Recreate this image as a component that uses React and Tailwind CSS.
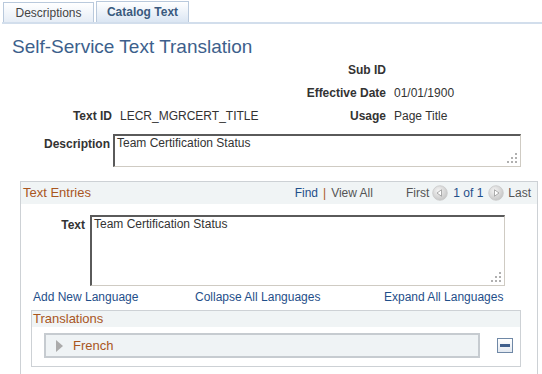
import React from "react";

const Grip = () => (
  <svg width="12" height="12" viewBox="0 0 12 12" className="absolute right-[2px] bottom-[2px]">
    <rect x="9" y="1" width="2" height="2" fill="#b0b0b0" />
    <rect x="5" y="5" width="2" height="2" fill="#b0b0b0" />
    <rect x="9" y="5" width="2" height="2" fill="#b0b0b0" />
    <rect x="1" y="9" width="2" height="2" fill="#b0b0b0" />
    <rect x="5" y="9" width="2" height="2" fill="#b0b0b0" />
    <rect x="9" y="9" width="2" height="2" fill="#b0b0b0" />
  </svg>
);

const TextBox = ({ text, className }) => (
  <div
    className={`relative bg-white border-t-2 border-l-2 border-r border-b border-t-[#5a5a5a] border-l-[#5a5a5a] border-r-[#cfcbc3] border-b-[#cfcbc3] pl-[2px] leading-[14px] ${className}`}
  >
    {text}
    <Grip />
  </div>
);

const PagerIcon = ({ dir }) => (
  <svg width="16" height="16" viewBox="0 0 16 16">
    <defs>
      <radialGradient id={`g${dir}`} cx="0.4" cy="0.35" r="0.7">
        <stop offset="0" stopColor="#f4f4f4" />
        <stop offset="1" stopColor="#c4c4c4" />
      </radialGradient>
    </defs>
    <circle cx="8" cy="8" r="7.3" fill={`url(#g${dir})`} stroke="#c9c9c9" strokeWidth="0.8" />
    {dir === "left" ? (
      <path d="M5 8 L9.5 4.8 L9.5 11.2 Z" fill="#ffffff" stroke="#8d8d8d" strokeWidth="0.7" />
    ) : (
      <path d="M11 8 L6.5 4.8 L6.5 11.2 Z" fill="#ffffff" stroke="#8d8d8d" strokeWidth="0.7" />
    )}
  </svg>
);

const Label = ({ children, className = "" }) => (
  <div className={`font-bold text-[#333] text-right ${className}`}>{children}</div>
);

const App = () => {
  return (
    <div className="w-[542px] h-[374px] overflow-hidden bg-white text-[12px] text-[#333] font-['Liberation_Sans',Arial,sans-serif]">
      {/* tabs */}
      <div className="flex items-end h-[24px] ml-[2px] pl-[1px] border-b-2 border-[#d2deec]">
        <div className="w-[91px] h-[20px] border border-b-0 border-[#b9c9dc] bg-gradient-to-b from-white to-[#e6edf6] text-[#444] flex items-center justify-center">
          Descriptions
        </div>
        <div className="ml-[2px] w-[93px] h-[21px] border border-b-0 border-[#b9c9dc] bg-gradient-to-b from-white to-[#dbe6f3] text-[#3a5a7e] font-bold flex items-center justify-center">
          Catalog Text
        </div>
      </div>

      {/* title */}
      <div className="mt-[12px] ml-[12px] h-[22px] leading-[22px] text-[19px] text-[#3d5f8c]">
        Self-Service Text Translation
      </div>

      {/* fields */}
      <div className="flex flex-col">
        <div className="flex items-center h-[23px]">
          <div className="w-[252px]" />
          <Label className="w-[134px]">Sub ID</Label>
        </div>
        <div className="flex items-center h-[23px]">
          <div className="w-[252px]" />
          <Label className="w-[134px]">Effective Date</Label>
          <div className="ml-[8px]">01/01/1900</div>
        </div>
        <div className="flex items-center h-[23px]">
          <Label className="w-[112px]">Text ID</Label>
          <div className="ml-[8px] w-[132px]">LECR_MGRCERT_TITLE</div>
          <Label className="w-[134px]">Usage</Label>
          <div className="ml-[8px]">Page Title</div>
        </div>
        <div className="flex items-start mt-[7px]">
          <Label className="w-[111px] pt-[1px] pr-[1px]">Description</Label>
          <TextBox text="Team Certification Status" className="ml-[2px] w-[408px] h-[33px]" />
        </div>
      </div>

      {/* Text Entries */}
      <div className="mt-[14px] ml-[20px] w-[518px] h-[200px] border border-[#cdd1d5]">
        <div className="flex items-center h-[22px] bg-[#f0f4f5]">
          <div className="pl-[2px] text-[13px] text-[#a9561e]">Text Entries</div>
          <div className="ml-auto flex items-center pr-[6px]">
            <span className="text-[#1f4f8a]">Find</span>
            <span className="mx-[5px] text-[#a9561e]">|</span>
            <span className="text-[#555]">View All</span>
            <span className="ml-[33px] text-[#555]">First</span>
            <span className="ml-[3px] flex"><PagerIcon dir="left" /></span>
            <span className="ml-[5px] text-[#1f4f8a]">1 of 1</span>
            <span className="ml-[5px] flex"><PagerIcon dir="right" /></span>
            <span className="ml-[4px] text-[#555]">Last</span>
          </div>
        </div>

        <div className="flex items-start mt-[11px]">
          <Label className="w-[64px] pt-[1px]">Text</Label>
          <TextBox text="Team Certification Status" className="ml-[5px] w-[415px] h-[71px]" />
        </div>

        <div className="flex items-center h-[16px] mt-[3px] ml-[12px] text-[#1f4f8a]">
          <div className="w-[162px]">Add New Language</div>
          <div className="w-[189px]">Collapse All Languages</div>
          <div>Expand All Languages</div>
        </div>

        <div className="mt-[5px] ml-[10px] w-[490px] border border-[#cdd1d5] pb-[8px]">
          <div className="h-[16px] leading-[16px] bg-[#f0f4f5] pl-[1px] text-[13px] text-[#a9561e]">
            Translations
          </div>
          <div className="flex items-center mt-[6px]">
            <div className="ml-[12px] w-[436px] h-[25px] border-2 border-[#c6cbd0] bg-[#eff3f5] flex items-center">
              <svg width="8" height="12" viewBox="0 0 8 12" className="ml-[10px]">
                <path d="M0 0 L7 6 L0 12 Z" fill="#ababab" />
              </svg>
              <span className="ml-[9px] text-[13px] text-[#a9561e]">French</span>
            </div>
            <div className="ml-[17px] w-[16px] h-[15px] border border-[#6f88a6] bg-gradient-to-b from-white to-[#e3e9f1] flex items-center justify-center">
              <div className="w-[10px] h-[3px] bg-[#3f5f8c]" />
            </div>
          </div>
        </div>
      </div>
    </div>
  );
};

export default App;
